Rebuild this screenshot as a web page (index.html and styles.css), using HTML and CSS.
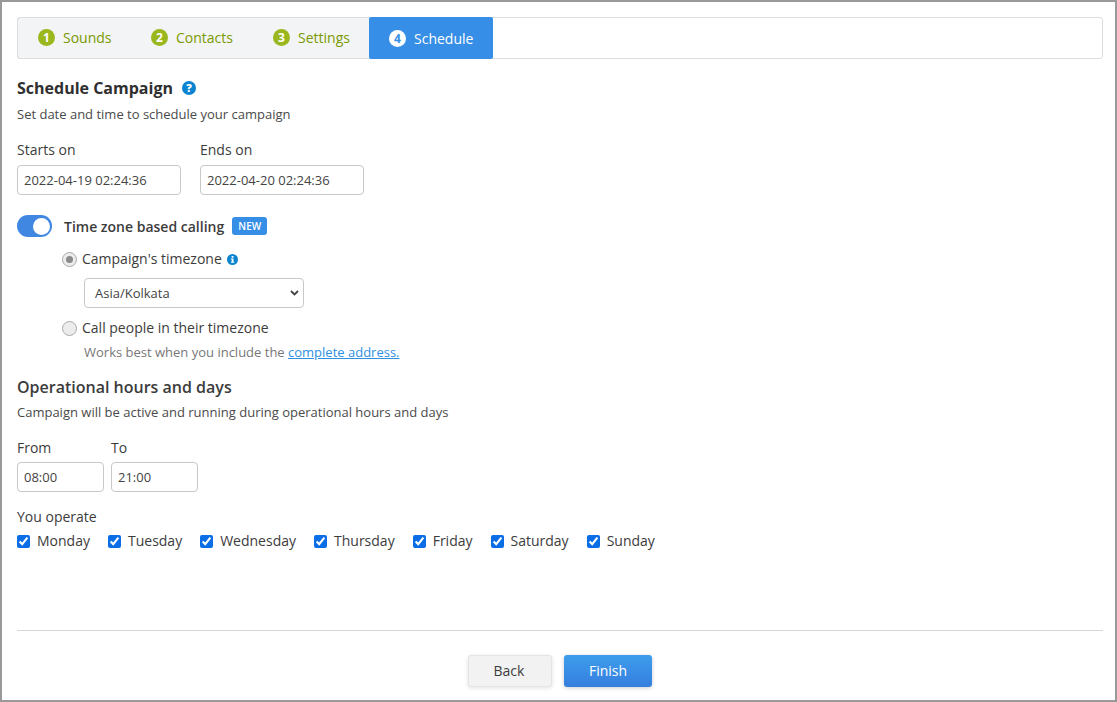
FILE: index.html
```html
<!DOCTYPE html>
<html lang="en">
<head>
<meta charset="utf-8">
<title>Schedule Campaign</title>
<link rel="stylesheet" href="styles.css">
</head>
<body>
<div class="frame">
  <nav class="steps">
    <a class="step step-1"><span class="num">1</span>Sounds</a>
    <a class="step step-2"><span class="num">2</span>Contacts</a>
    <a class="step step-3"><span class="num">3</span>Settings</a>
    <a class="step step-4 active"><span class="num">4</span>Schedule</a>
  </nav>

  <div class="title-row">
    <h2 class="title">Schedule Campaign</h2>
    <svg class="help" width="14" height="14" viewBox="0 0 14 14"><circle cx="7" cy="7" r="7" fill="#0a84d0"/><text x="7" y="10.8" text-anchor="middle" class="help-q">?</text></svg>
  </div>
  <p class="sub sub-first">Set date and time to schedule your campaign</p>

  <div class="dates">
    <label class="field"><span class="label">Starts on</span><input class="input date" value="2022-04-19 02:24:36"></label>
    <label class="field"><span class="label">Ends on</span><input class="input date" value="2022-04-20 02:24:36"></label>
  </div>

  <div class="tz-row">
    <span class="toggle"><span class="knob"></span></span>
    <strong class="tz-label">Time zone based calling</strong>
    <span class="badge">NEW</span>
  </div>

  <div class="tz-options">
    <div class="radio-row radio-first">
      <span class="radio checked"></span>
      <span>Campaign's timezone</span>
      <svg class="info" width="11" height="11" viewBox="0 0 11 11"><circle cx="5.5" cy="5.500" r="5.500" fill="#0a84d0"/><rect x="4.600" y="2" width="1.900" height="1.700" fill="#fff"/><path d="M3.900 4.500h2.600v3.300h.8v1H3.900v-1h.8V5.500h-.8z" fill="#fff"/></svg>
    </div>
    <select class="input select"><option>Asia/Kolkata</option></select>
    <div class="radio-row radio-second">
      <span class="radio"></span>
      <span>Call people in their timezone</span>
    </div>
    <p class="hint">Works best when you include the <a class="link">complete address.</a></p>
  </div>

  <h3 class="heading">Operational hours and days</h3>
  <p class="sub sub-ops">Campaign will be active and running during operational hours and days</p>

  <div class="hours">
    <label class="field"><span class="label">From</span><input class="input time" value="08:00"></label>
    <label class="field"><span class="label">To</span><input class="input time" value="21:00"></label>
  </div>

  <div class="operate">You operate</div>
  <div class="days">
    <label class="day"><input type="checkbox" checked>Monday</label>
    <label class="day"><input type="checkbox" checked>Tuesday</label>
    <label class="day"><input type="checkbox" checked>Wednesday</label>
    <label class="day"><input type="checkbox" checked>Thursday</label>
    <label class="day"><input type="checkbox" checked>Friday</label>
    <label class="day"><input type="checkbox" checked>Saturday</label>
    <label class="day"><input type="checkbox" checked>Sunday</label>
  </div>

  <div class="footer">
    <button class="btn back">Back</button>
    <button class="btn finish">Finish</button>
  </div>
</div>
</body>
</html>
```

FILE: styles.css
```css
* { box-sizing: border-box; }
html, body { margin: 0; padding: 0; }
body {
  font-family: "Open Sans", sans-serif;
  font-size: 14px;
  color: #3c3c3c;
  background: #fff;
}
.frame {
  width: 1117px;
  height: 702px;
  border: 2px solid #999;
  padding: 15px 12px 0 15px;
  display: flex;
  flex-direction: column;
  overflow: hidden;
}
.steps {
  display: flex;
  height: 42px;
  border: 1px solid #dedede;
  border-radius: 3px;
  flex: none;
}
.step {
  display: flex;
  align-items: center;
  height: 42px;
  margin-top: -1px;
  padding-bottom: 1px;
  background: #f3f4f6;
  color: #7a9a01;
  font-size: 14px;
}
.step-1 { width: 114px; padding-left: 20px; margin-left: -1px; border-radius: 3px 0 0 3px; border: 1px solid #dedede; border-right: 0; }
.step-2 { width: 123px; padding-left: 20px; border-top: 1px solid #dedede; border-bottom: 1px solid #dedede; }
.step-3 { width: 115px; padding-left: 19px; border-top: 1px solid #dedede; border-bottom: 1px solid #dedede; }
.step-4 { width: 124px; padding-left: 20px; background: #368ee6; color: #fff; border-radius: 2px; padding-bottom: 0; }
.num {
  width: 17px;
  height: 17px;
  border-radius: 50%;
  background: #9ab71d;
  color: #fff;
  font-size: 12px;
  font-weight: 700;
  display: flex;
  align-items: center;
  justify-content: center;
  margin-right: 8px;
}
.active .num { background: #fff; color: #368ee6; }
.title-row { display: flex; align-items: center; margin-top: 18px; height: 22px; flex: none; }
.title { margin: 0; font-size: 16px; font-weight: 700; color: #2f2f2f; line-height: 22px; }
.help { margin-left: 9px; }
.help-q { fill: #fff; font-size: 11px; font-weight: 800; font-family: "Open Sans", sans-serif; }
.sub { margin: 0; font-size: 13px; line-height: 18px; color: #4a4a4a; }
.sub-first { margin-top: 6px; }
.dates { display: flex; gap: 19px; margin-top: 17px; }
.field { display: flex; flex-direction: column; }
.label { font-size: 14px; line-height: 20px; color: #3c3c3c; }
.input {
  font-family: "Open Sans", sans-serif;
  font-size: 13px;
  color: #444;
  border: 1px solid #c8c8c8;
  border-radius: 4px;
  background: #fff;
  height: 30px;
  outline: 0;
}
.dates .input { margin-top: 5px; }
.date { width: 164px; padding: 0 6px; }
.tz-row { display: flex; align-items: center; margin-top: 19px; height: 24px; }
.toggle {
  width: 35px;
  height: 22px;
  border-radius: 11px;
  background: #4087e2;
  display: flex;
  align-items: center;
  justify-content: flex-end;
  padding-right: 2px;
  margin-right: 12px;
}
.knob { width: 17px; height: 17px; background: #fff; border-radius: 50%; }
.tz-label { font-size: 14px; font-weight: 600; color: #3c3c3c; }
.badge {
  margin-left: 8px;
  width: 35px;
  height: 18px;
  background: #368ee6;
  color: #fff;
  font-size: 10px;
  font-weight: 600;
  border-radius: 3px;
  display: flex;
  align-items: center;
  justify-content: center;
}
.tz-options { padding-left: 45px; }
.radio-row { display: flex; align-items: center; font-size: 14px; line-height: 20px; color: #3c3c3c; }
.radio-first { margin-top: 11px; }
.radio-second { margin-top: 10px; }
.radio {
  width: 15px;
  height: 15px;
  border-radius: 50%;
  border: 1px solid #aaa;
  background: #ececec;
  margin-right: 5px;
  display: flex;
  align-items: center;
  justify-content: center;
}
.radio.checked::after { content: ""; width: 7px; height: 7px; border-radius: 50%; background: #8a8a8a; }
.info { margin-left: 5px; }
.select {
  display: block;
  margin: 9px 0 0 22px;
  width: 220px;
  padding: 0 0 0 10px;
  appearance: none;
  background: #fff url("data:image/svg+xml,%3Csvg xmlns='http://www.w3.org/2000/svg' width='9' height='6' viewBox='0 0 9 6'%3E%3Cpath d='M1 1l3.500 3.500L8 1' fill='none' stroke='%23444' stroke-width='1.800'/%3E%3C/svg%3E") no-repeat right 4px center;
}
.hint { margin: 5px 0 0 22px; font-size: 13px; line-height: 18px; color: #777; }
.link { color: #2f8fe0; text-decoration: underline; }
.heading { margin: 15px 0 0; font-size: 16px; font-weight: 600; line-height: 22px; color: #3c3c3c; }
.sub-ops { margin-top: 5px; }
.hours { display: flex; gap: 7px; margin-top: 17px; }
.hours .input { margin-top: 4px; }
.time { width: 87px; padding: 0 6px; }
.operate { margin-top: 15px; font-size: 14px; line-height: 20px; }
.days { display: flex; margin-top: 4px; gap: 18px; }
.day { display: flex; align-items: center; font-size: 14px; line-height: 20px; }
.day input { width: 13px; height: 13px; margin: 0 7px 0 0; accent-color: #0b6ee6; }
.footer {
  margin-top: auto;
  border-top: 1px solid #d6d6d6;
  height: 70px;
  display: flex;
  justify-content: center;
  gap: 12px;
  padding-top: 24px;
  flex: none;
}
.btn {
  font-family: "Open Sans", sans-serif;
  font-size: 14px;
  height: 32px;
  padding: 0 0 2px;
  border-radius: 3px;
  cursor: pointer;
}
.back { width: 84px; padding-right: 2px; background: #f2f2f2; color: #3c3c3c; border: 1px solid #e4e4e4; box-shadow: 0 1px 4px rgba(0,0,0,.12); }
.finish { width: 88px; color: #fff; border: 0; background: linear-gradient(#3e9dec, #357ede); box-shadow: 0 1px 4px rgba(0,0,0,.2); }
```
